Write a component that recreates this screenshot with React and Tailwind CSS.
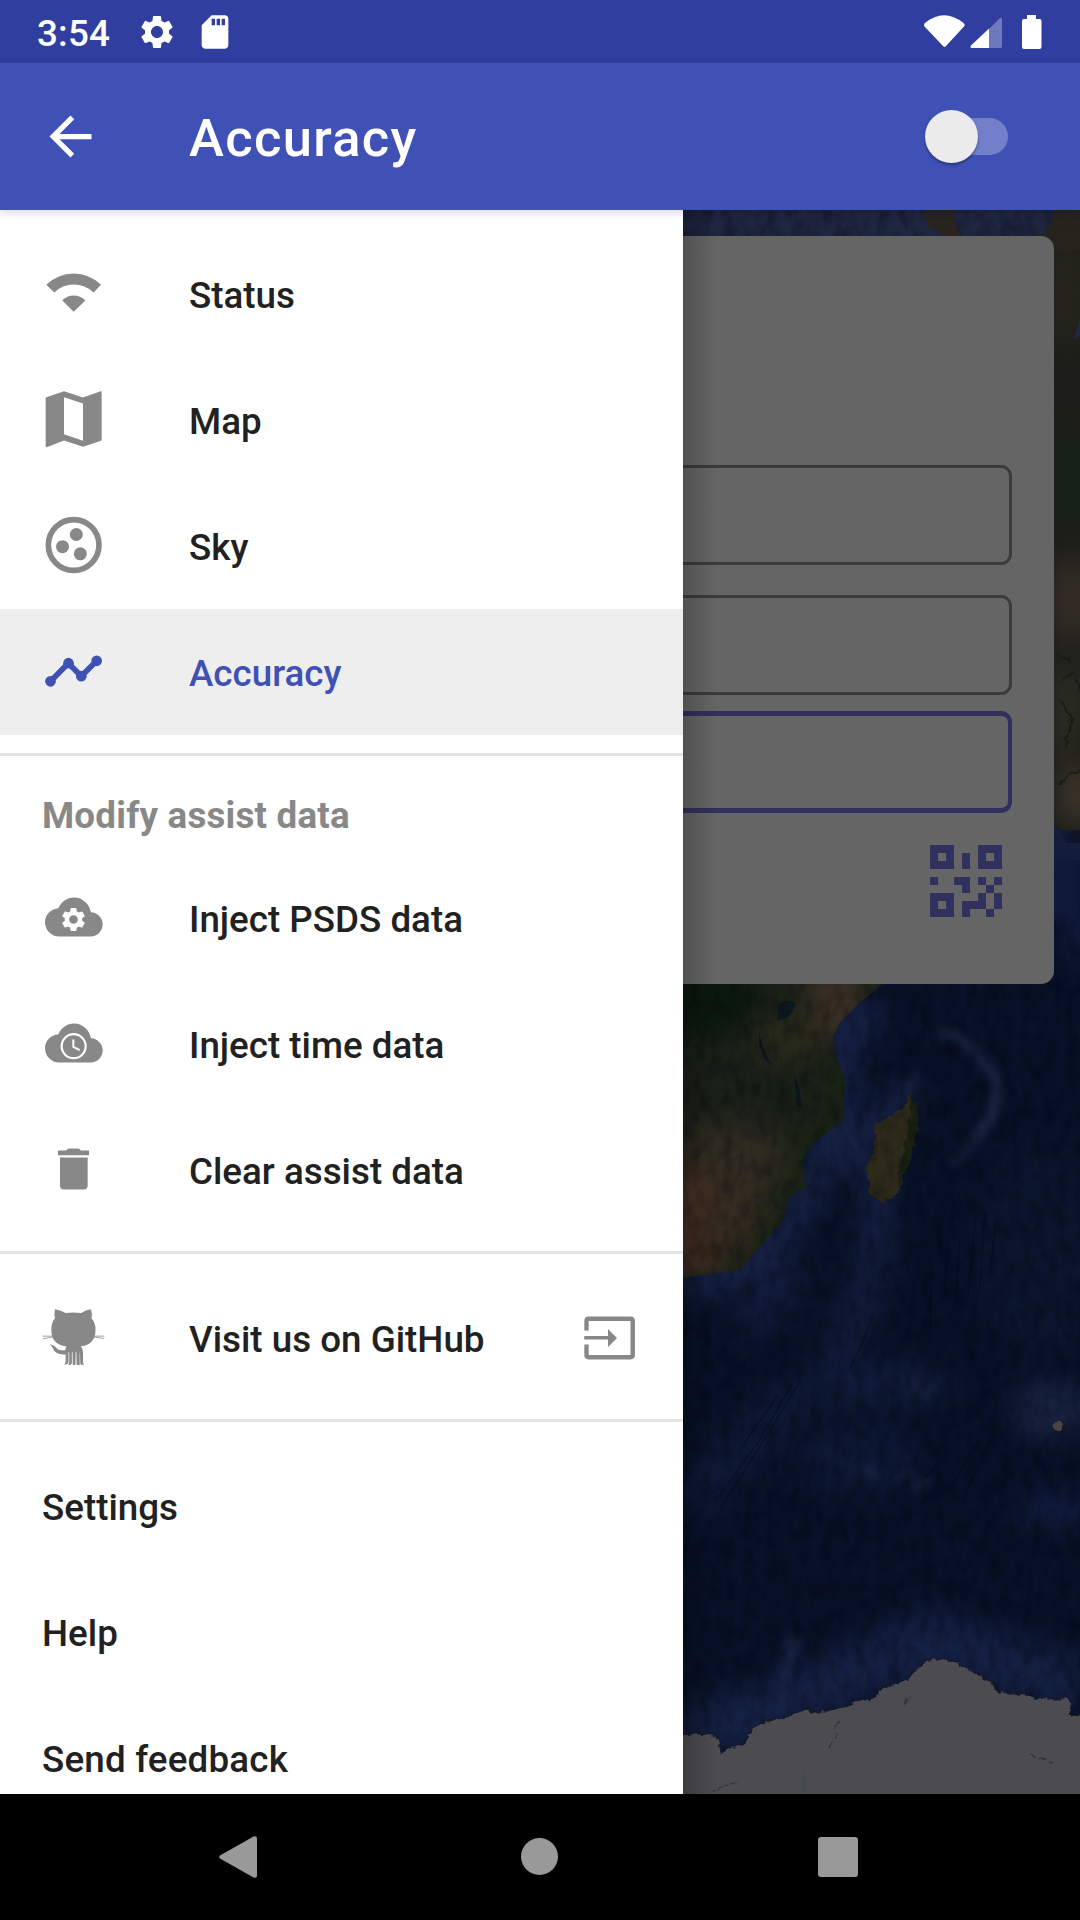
import React from "react";
import { MdSettings, MdArrowBack, MdSdCard } from "react-icons/md";

const GREY = "#888888";

function Icon({ box, children, stretch }) {
  return (
    <svg
      className="h-[63px] w-[63px] shrink-0 overflow-visible"
      viewBox={box}
      preserveAspectRatio={stretch ? "none" : "xMidYMid"}
      fill={GREY}
    >
      {children}
    </svg>
  );
}

const WifiIcon = () => (
  <Icon box="126 67.5 189 189">
    <path d="M139 136Q174 102 221 102T303 136L281 159Q255 135 221 135T163 159Z" />
    <path d="M187 183Q201 168 221 168T256 183L221 217Z" />
  </Icon>
);

const MapIcon = () => (
  <Icon box="126 445.5 189 189">
    <path
      fillRule="evenodd"
      d="M302 455L249 474L192 455L139 473Q137 474 137 477V620Q137 623 140 623L192 603L249 622L303 604Q305 603 305 600V458Q305 454 302 455ZM249 604L192 584V473L249 492Z"
    />
  </Icon>
);

const SkyIcon = () => (
  <Icon box="126 823.5 189 189">
    <circle cx="221" cy="916.5" r="76" fill="none" stroke={GREY} strokeWidth="17" />
    <circle cx="229" cy="885" r="19.500" />
    <circle cx="187.500" cy="921.500" r="19.500" />
    <circle cx="241" cy="943" r="19.500" />
  </Icon>
);

const TimelineIcon = () => (
  <Icon box="126 121.5 189 189">
    <g fill="#3f51b5">
      <circle cx="151.500" cy="245.500" r="16" />
      <circle cx="205.500" cy="191" r="16" />
      <circle cx="244" cy="230" r="16" />
      <circle cx="290" cy="184" r="16" />
    </g>
    <path d="M151 246L205 191L244 230L290 184" fill="none" stroke="#3f51b5" strokeWidth="17" />
  </Icon>
);

const CLOUD =
  "M175 926C184 907 201 894 222 894C247 894 268 913 273 938C292 939 308 954 308 974C308 994 292 1011 272 1011H178C154 1011 135 991 135 968C135 946 152 928 175 926Z";

const CloudGearIcon = () => (
  <Icon box="126 859.5 189 189">
    <path d={CLOUD} />
    <svg x="177" y="916.5" width="87" height="87" viewBox="0 0 24 24" fill="white">
      <MdSettings size={24} color="white" />
    </svg>
  </Icon>
);

const CloudClockIcon = () => (
  <Icon box="126 157.5 189 189">
    <path d={CLOUD} transform="translate(0 -702)" />
    <circle cx="221" cy="260" r="36" fill="none" stroke="white" strokeWidth="6.500" />
    <path d="M220 240V262L239 272" fill="none" stroke="white" strokeWidth="6" />
  </Icon>
);

const TrashIcon = () => (
  <Icon box="126 535.5 189 189">
    <path d="M174 573H198Q202 567 208 567H233Q239 567 243 573H267V587H174Z" />
    <path d="M180 594H263V678Q263 690 251 690H192Q180 690 180 678Z" />
  </Icon>
);

const OctocatIcon = () => (
  <Icon box="94.1 199.5 141.1 189" stretch>
    <path d="M123 209.500Q135 211 147 220.500Q164 217 182 220.500Q192 211 204 209.500Q207 223 205 236Q214 250 214 271C214 300 203 320 178 321H152C126 320 115 300 115 271Q115 250 123 236Q121 223 123 209.500Z" />
    <path d="M150 317H179Q186 326 186 341V368L188 375Q183 377 180 374L179 340H178.500V370L179 376Q174 378 171.500 374L171 337H169.500L169 376Q166 377 163 376L162.500 337H161V372Q158 378 153 376L155 370V338H153.500V368Q151 377 144 375L147 368V345H140Q127 344 121 333Q118 322 112 313.500Q121 316 127 326Q131 334 146 332Q147 322 150 317Z" />
    <path
      d="M95 290L120 290M96 298L120 292M209 290L234 290M209 292L233 297"
      fill="none"
      stroke={GREY}
      strokeWidth="2"
    />
  </Icon>
);

const ExitIcon = () => (
  <svg className="h-[44px] w-[52px]" viewBox="0 0 52 44" fill={GREY}>
    <path
      d="M2.500 14.500V5Q2.500 2.800 4.700 2.800H46.500Q48.700 2.800 48.700 5V39Q48.700 41.200 46.500 41.200H4.700Q2.500 41.200 2.500 39V28.500"
      fill="none"
      stroke={GREY}
      strokeWidth="4.400"
    />
    <path d="M0.300 20H24V13L33 22L24 31V23.500H0.300Z" />
  </svg>
);

const QR_ROWS = [
  "111000111",
  "101010101",
  "111010111",
  "000000000",
  "100110101",
  "000010010",
  "111000101",
  "101011101",
  "111010010",
];

function QrCode() {
  return (
    <svg className="h-[72px] w-[72px]" viewBox="0 0 9 9" fill="#313160" shapeRendering="crispEdges">
      {QR_ROWS.map((row, y) =>
        row.split("").map((c, x) => (c === "1" ? <rect key={`${x}-${y}`} x={x} y={y} width="1" height="1" /> : null))
      )}
    </svg>
  );
}

function Row({ icon, label, active, trailing }) {
  return (
    <div
      className={`flex h-[126px] shrink-0 items-center pl-[42px] ${
        active ? "bg-[#eeeeee] text-[#3f51b5]" : "text-[#212121]"
      }`}
    >
      {icon && <div className="mr-[84px] mb-px">{icon}</div>}
      <span className="pt-[2px] text-[36.75px] leading-[43px] font-medium whitespace-nowrap">{label}</span>
      {trailing && <div className="mr-[47px] mb-px ml-auto">{trailing}</div>}
    </div>
  );
}

const Divider = () => <div className="mt-[18px] mb-[21px] h-[3px] shrink-0 bg-[#e4e4e4]" />;

function StatusBar() {
  return (
    <div className="flex h-[63px] items-center bg-[#303e9f] text-white">
      <span className="ml-[37px] w-[100px] pt-[5px] text-[36.75px] leading-none font-medium tracking-[0.2px]">3:54</span>
      <MdSettings className="h-[40px] w-[40px]" />
      <MdSdCard className="ml-[18px] h-[40px] w-[40px]" />
      <svg className="ml-auto h-[36px] w-[120px]" viewBox="923 13 120 36" fill="white">
        <path d="M925 22Q944 6.500 963.500 22Q965.500 23.500 964 25.500L946 45Q944.500 47 943 45L924.500 25.500Q923.500 23.500 925 22Z" />
        <path d="M989 28L1000 17Q1002 16 1002 18V45.500Q1002 47 1000.500 47H989Z" opacity=".3" />
        <path d="M989 27.500V47H972Q969.500 46.500 971 44.500Z" />
        <path d="M1027 14H1036V18H1039.500Q1041.500 18 1041.500 20V46Q1041.500 48 1039.500 48H1024Q1022 48 1022 46V20Q1022 18 1024 18H1027Z" />
      </svg>
      <div className="w-[37px]" />
    </div>
  );
}

function AppBar() {
  return (
    <div className="relative z-20 flex h-[147px] items-center bg-[#3f51b5] text-white shadow-[0_3px_8px_rgba(0,0,0,0.14)]">
      <MdArrowBack className="ml-[39px] h-[63px] w-[63px]" />
      <span className="ml-[87px] pt-[4px] text-[52.5px] leading-none font-medium tracking-[1.35px]">Accuracy</span>
      <div className="mr-[72px] ml-auto flex h-[37px] w-[79px] items-center rounded-full bg-[linear-gradient(90deg,transparent_20px,#737fca_20px)]">
        <div className="-ml-[4px] h-[53px] w-[53px] rounded-full bg-[#ebebeb] shadow-[0_2px_3px_rgba(0,0,0,0.35)]" />
      </div>
    </div>
  );
}

function SatelliteMap() {
  return (
    <svg
      className="absolute top-0 right-0 h-[1584px] w-[397px]"
      viewBox="683 210 397 1584"
      colorInterpolationFilters="sRGB"
    >
      <defs>
        <filter id="soft" x="-60%" y="-60%" width="220%" height="220%">
          <feGaussianBlur stdDeviation="14" />
        </filter>
        <filter id="feather" x="-20%" y="-20%" width="140%" height="140%">
          <feGaussianBlur stdDeviation="4" />
        </filter>
        <filter id="rough" x="-5%" y="-5%" width="110%" height="110%">
          <feTurbulence type="fractalNoise" baseFrequency="0.12" numOctaves="3" seed="3" />
          <feDisplacementMap in="SourceGraphic" scale="8" xChannelSelector="R" yChannelSelector="G" />
        </filter>
        <filter id="grain" x="0" y="0" width="100%" height="100%">
          <feTurbulence type="fractalNoise" baseFrequency="0.09 0.05" numOctaves="4" seed="8" />
          <feColorMatrix values="0 0 0 0 0  0 0 0 0 0.01  0 0 0 0 0.03  1.6 0 0 0 -0.6" />
        </filter>
        <clipPath id="africa">
          <path d="M683 984H883L857 1005L840 1022L833 1037L837 1062L845 1077L843 1120L813 1143L802 1160L805 1187L788 1198L783 1220L763 1243L740 1270L710 1274L683 1278Z" />
        </clipPath>
      </defs>
      <rect x="683" y="210" width="397" height="1584" fill="#081127" />
      <rect x="683" y="210" width="397" height="40" fill="#1f2640" />

      <g filter="url(#soft)">
        <path d="M683 1285L760 1255L800 1200L835 1130L840 1050L870 1000" fill="none" stroke="#182347" strokeWidth="40" />
        <path d="M910 1085L862 1150L880 1205L872 1270" fill="none" stroke="#182347" strokeWidth="26" />
        <path d="M740 1330L800 1270M872 1270L855 1320L830 1370" fill="none" stroke="#121b3a" strokeWidth="40" />
        <path d="M683 1510L800 1390" fill="none" stroke="#0f1936" strokeWidth="50" />
        <path d="M683 1740L800 1700L930 1640L1080 1690" fill="none" stroke="#152144" strokeWidth="60" />
        <path d="M1055 820L1080 960" stroke="#151f42" strokeWidth="24" />
        <ellipse cx="1050" cy="1410" rx="38" ry="28" fill="#1a2443" />
        <ellipse cx="1055" cy="1510" rx="40" ry="14" fill="#142044" />
        <ellipse cx="1040" cy="1250" rx="70" ry="110" fill="#0b152d" />
        <ellipse cx="880" cy="1385" rx="80" ry="20" fill="#111d3c" />
        <ellipse cx="860" cy="1460" rx="60" ry="34" fill="#0e1936" />
        <path d="M760 1230L815 1150" stroke="#121c36" strokeWidth="26" />
      </g>
      <g filter="url(#feather)" fill="none" stroke="#1b2542" strokeLinecap="round">
        <path d="M942 1034Q965 1030 996 1080" strokeWidth="9" />
        <path d="M998 1084Q996 1118 976 1138" strokeWidth="11" />
        <path d="M955 1162L970 1148M917 1075L905 1095" strokeWidth="6" />
        <path d="M793 1642Q786 1660 782 1700" strokeWidth="14" stroke="#182344" />
        <path d="M908 1388L930 1393M865 1470L876 1473M897 1476L906 1473M915 1487L928 1482" strokeWidth="7" />
      </g>

      <g clipPath="url(#africa)">
        <rect x="683" y="970" width="210" height="320" fill="#1a2118" />
        <g filter="url(#soft)">
          <ellipse cx="700" cy="1000" rx="60" ry="38" fill="#0b190d" />
          <ellipse cx="835" cy="1000" rx="26" ry="38" fill="#3f3126" />
          <ellipse cx="785" cy="1040" rx="36" ry="22" fill="#2b2b1c" />
          <ellipse cx="725" cy="1165" rx="66" ry="44" fill="#312c22" />
          <ellipse cx="690" cy="1225" rx="42" ry="54" fill="#472f23" />
          <ellipse cx="735" cy="1225" rx="38" ry="30" fill="#342b21" />
          <path d="M835 1060L830 1120L800 1150L790 1200L750 1265" fill="none" stroke="#182313" strokeWidth="22" />
        </g>
        <path d="M778 1004Q786 998 795 1003Q794 1018 778 1020ZM759 1032L763 1048L772 1066L767 1062L759 1045ZM794 1073L799 1088L802 1108L797 1105Z" fill="#0b181c" />
      </g>
      <g filter="url(#rough)">
        <path d="M912 1095L920 1115L911 1160L897 1195L882 1202L871 1194L867 1168L874 1149L875 1124L899 1111Z" fill="#2f2b1b" />
        <path d="M912 1095L920 1115L911 1160L899 1188L898 1170L908 1130Z" fill="#1b2213" />
      </g>
      <rect x="683" y="210" width="397" height="1584" filter="url(#grain)" opacity=".4" />

      <g filter="url(#rough)">
        <path
          d="M670 1733H683L717 1735L722 1752L745 1742L753 1727L803 1710L827 1712L870 1698L887 1685L907 1680L917 1667L933 1658L957 1663L990 1680L998 1692L1057 1700L1068 1695L1072 1715L1095 1716V1815H670Z"
          fill="#4c4b50"
          stroke="#15192a"
          strokeWidth="1.500"
        />
        <path d="M838 1722L836 1735L830 1747M905 1705L910 1695M713 1791L735 1783M1030 1754L1052 1762" fill="none" stroke="#36383d" strokeWidth="2" strokeDasharray="7 3" />
      </g>
      <path d="M805 1775L802 1794" stroke="#3a4b53" strokeWidth="6" filter="url(#feather)" />

      <path d="M925 208Q924 224 934 230L945 237H962Q952 225 955 208ZM1055 208L1050 228L1038 238V260H1085V208Z" fill="#27231d" filter="url(#rough)" />
      <rect x="1050" y="250" width="30" height="580" fill="#1d1e19" />
      <g filter="url(#soft)">
        <ellipse cx="1066" cy="290" rx="20" ry="60" fill="#25251c" />
        <ellipse cx="1068" cy="480" rx="20" ry="45" fill="#142317" />
        <ellipse cx="1072" cy="600" rx="24" ry="44" fill="#352d26" />
        <ellipse cx="1066" cy="710" rx="16" ry="50" fill="#2d2e22" />
        <ellipse cx="1078" cy="795" rx="18" ry="30" fill="#43382e" />
      </g>
      <path d="M1050 823L1060 830L1066 843H1080V860H1050Z" fill="#141d3b" />
      <rect x="1050" y="858" width="30" height="60" fill="#101938" filter="url(#feather)" />
      <path d="M1080 318L1074 340L1080 336Z" fill="#202648" />
      <path
        d="M1058 655L1070 660M1062 680L1074 672L1080 690M1060 700L1072 720L1066 745M1058 785L1080 768"
        fill="none"
        stroke="#191b16"
        strokeWidth="2"
        filter="url(#rough)"
      />

      <g stroke="#030817" strokeWidth="1.200" fill="none" opacity=".5">
        <path d="M801 1380L770 1430L720 1510M792 1384L760 1440L716 1500M778 1395L740 1450M866 1335L850 1370M872 1318L858 1352" />
        <path d="M985 1210L980 1290M975 1220L968 1300M960 1240L955 1310M948 1245L944 1300M996 1220L990 1275M932 1270L930 1330" />
        <path d="M990 1440L965 1495M978 1440L950 1490M950 1450L925 1478" />
      </g>
      <ellipse cx="1058" cy="1426" rx="5" ry="4" fill="#4a453f" filter="url(#rough)" />
    </svg>
  );
}

function NavBar() {
  return (
    <div className="flex h-[126px] items-center bg-black">
      <svg className="ml-[219px] h-[42px] w-[38px]" viewBox="0 0 38 42" fill="#999999">
        <path d="M1 19.500L34.500 0.600Q38 -0.500 38 2.500V39.500Q38 42.500 34.500 41.400L1 22.500Q-0.500 21 1 19.500Z" />
      </svg>
      <div className="mb-px ml-[264px] h-[37px] w-[37px] rounded-full bg-[#999999]" />
      <div className="ml-[260px] h-[40px] w-[40px] rounded-[3px] bg-[#999999]" />
    </div>
  );
}

export default function App() {
  return (
    <div className="h-[1920px] w-[1080px] overflow-hidden bg-black font-['Roboto',sans-serif]">
      <StatusBar />
      <AppBar />
      <main className="relative h-[1584px] overflow-hidden">
        <SatelliteMap />
        <section className="relative mx-[26px] mt-[26px] flex h-[748px] flex-col rounded-[13px] bg-[#656565] px-[42px] pt-[229px]">
          <div className="h-[100px] rounded-[11px] border-[3px] border-[#3b3b3b]" />
          <div className="mt-[30px] h-[100px] rounded-[11px] border-[3px] border-[#3b3b3b]" />
          <div className="mt-[16px] h-[102px] rounded-[11px] border-x-[4px] border-y-[5px] border-[#30305e]" />
          <div className="mt-[32px] mr-[10px] self-end">
            <QrCode />
          </div>
        </section>
        <nav className="absolute top-0 left-0 flex h-[1584px] w-[683px] flex-col overflow-hidden bg-white pt-[21px]">
          <Row icon={<WifiIcon />} label="Status" />
          <Row icon={<MapIcon />} label="Map" />
          <Row icon={<SkyIcon />} label="Sky" />
          <Row icon={<TimelineIcon />} label="Accuracy" active />
          <div className="mt-[18px] h-[3px] shrink-0 bg-[#e4e4e4]" />
          <div className="flex h-[99px] shrink-0 items-center pt-[20px] pl-[42px] text-[36.75px] leading-[43px] font-bold tracking-[0.2px] text-[#888888]">
            Modify assist data
          </div>
          <Row icon={<CloudGearIcon />} label="Inject PSDS data" />
          <Row icon={<CloudClockIcon />} label="Inject time data" />
          <Row icon={<TrashIcon />} label="Clear assist data" />
          <Divider />
          <Row icon={<OctocatIcon />} label="Visit us on GitHub" trailing={<ExitIcon />} />
          <Divider />
          <Row label="Settings" />
          <Row label="Help" />
          <Row label={<span className="tracking-[0.18px]">Send feedback</span>} />
        </nav>
        <div className="absolute top-0 left-[683px] h-[1584px] w-[34px] bg-linear-to-r from-black/20 to-transparent" />
      </main>
      <NavBar />
    </div>
  );
}
